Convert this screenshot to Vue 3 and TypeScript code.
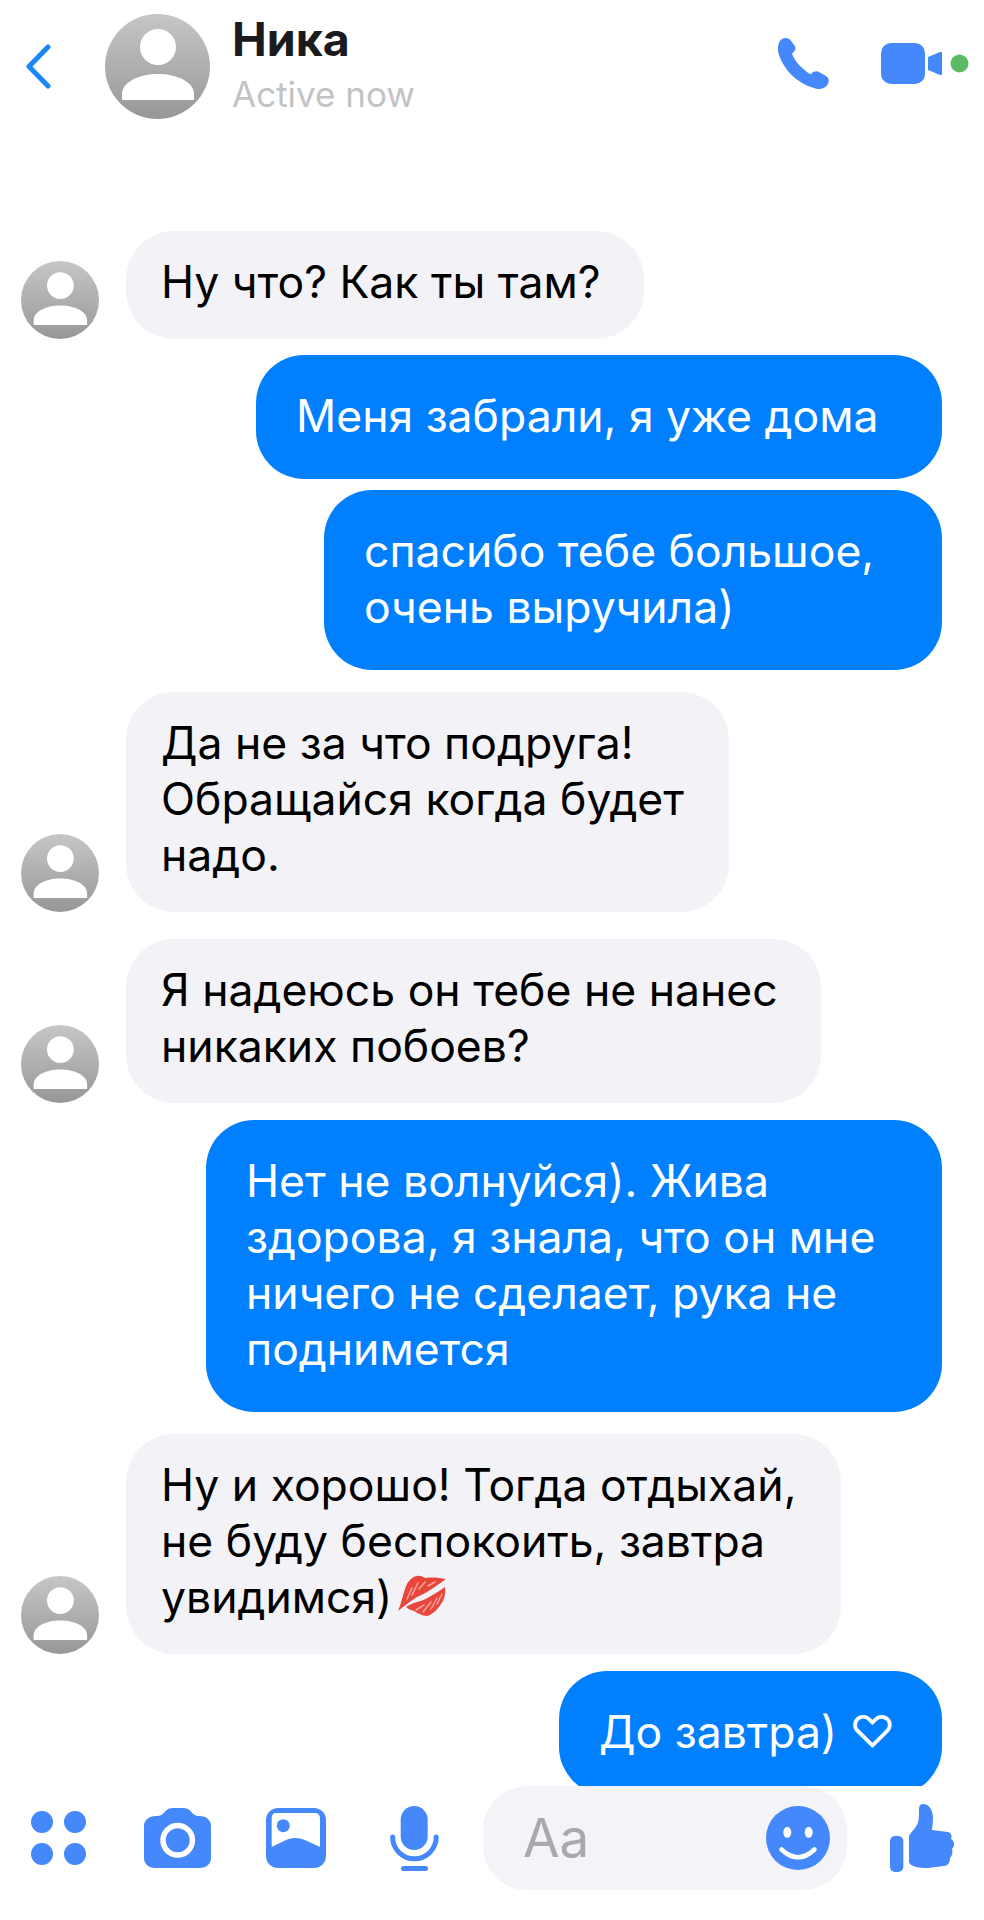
<script setup lang="ts">
interface Message {
  id: number
  mine: boolean
  lines: string[]
  width: number
  gap: number
  kiss?: boolean
}

const messages: Message[] = [
  { id: 1, mine: false, lines: ['Ну что? Как ты там?'], width: 518, gap: 0 },
  { id: 2, mine: true, lines: ['Меня забрали, я уже дома'], width: 686, gap: 16 },
  { id: 3, mine: true, lines: ['спасибо тебе большое,', 'очень выручила)'], width: 618, gap: 11 },
  { id: 4, mine: false, lines: ['Да не за что подруга!', 'Обращайся когда будет', 'надо.'], width: 603, gap: 22 },
  { id: 5, mine: false, lines: ['Я надеюсь он тебе не нанес', 'никаких побоев?'], width: 695, gap: 27 },
  {
    id: 6,
    mine: true,
    lines: ['Нет не волнуйся). Жива', 'здорова, я знала, что он мне', 'ничего не сделает, рука не', 'поднимется'],
    width: 736,
    gap: 17,
  },
  {
    id: 7,
    mine: false,
    lines: ['Ну и хорошо! Тогда отдыхай,', 'не буду беспокоить, завтра', 'увидимся)'],
    width: 715,
    gap: 22,
    kiss: true,
  },
  { id: 8, mine: true, lines: ['До завтра) ♡'], width: 383, gap: 17 },
]
</script>

<template>
  <div class="page">
    <header class="header">
      <svg class="back" viewBox="0 0 25 45" aria-hidden="true">
        <path d="M22 3 L3 22.5 L22 42" />
      </svg>
      <div class="avatar avatar-large">
        <svg viewBox="0 0 105 105" aria-hidden="true">
          <circle cx="53" cy="33" r="18" />
          <path d="M17 86 V80 C17 68 34 60 53 60 C72 60 89 68 89 80 V86 Z" />
        </svg>
      </div>
      <div class="title">
        <div class="name">Ника</div>
        <div class="status">Active now</div>
      </div>
      <div class="actions">
        <svg class="phone" viewBox="0 0 152 152" aria-hidden="true">
          <path d="M8 6 C16 -2 30 -2 37 6 L49 22 C54 29 52 36 47 41 L42 46 C46 66 78 98 97 108 C104 100 114 97 122 101 L143 113 C152 118 154 130 147 140 C140 149 126 154 114 151 C52 135 14 90 1 44 C-2 30 1 14 8 6 Z" />
        </svg>
        <svg class="video" viewBox="0 0 88 41" aria-hidden="true">
          <rect x="0" y="0" width="44" height="41" rx="10" />
          <path d="M47 14 L59 9 C60.5 8.5 61 9.5 61 11 V30 C61 31.5 60.5 32.5 59 32 L47 27 Z" />
          <circle class="online" cx="78.5" cy="20.5" r="9" />
        </svg>
      </div>
    </header>

    <main class="messages">
      <div
        v-for="message in messages"
        :key="message.id"
        class="row"
        :class="{ mine: message.mine }"
        :style="{ marginTop: message.gap + 'px' }"
      >
        <div v-if="!message.mine" class="avatar avatar-small">
          <svg viewBox="0 0 105 105" aria-hidden="true">
            <circle cx="53" cy="33" r="18" />
            <path d="M17 86 V80 C17 68 34 60 53 60 C72 60 89 68 89 80 V86 Z" />
          </svg>
        </div>
        <div class="bubble" :style="{ width: message.width + 'px' }">
          <div v-for="line in message.lines" :key="line" class="line">{{ line }}</div>
          <svg v-if="message.kiss" class="kiss" viewBox="0 0 48 42" aria-hidden="true">
            <path class="lip" d="M0 37 C3 30 6 16 9 10 C12 5 16 2 19 2 C23 1 25 4 28 4 C34 3 42 4 48 5 C42 9 36 14 29 18 C24 21 20 22 16 25 C10 29 5 33 0 37 Z" />
            <path class="lip" d="M47 13 C48 20 46 26 43 30 C39 36 34 41 29 42 C24 42 20 39 16 37 C13 36 10 35 8 33 C11 31 15 29 19 28 C24 27 28 25 33 22 C38 19 43 16 47 13 Z" />
            <path class="crease" d="M9 25 L14 14 M14 21 L20 9 M21 15 L27 8 M30 12 L37 8 M18 36 L26 31 M25 38 L33 28 M33 35 L39 24 M39 30 L44 20" />
          </svg>
        </div>
      </div>
    </main>

    <footer class="composer">
      <svg class="icon dots" viewBox="0 0 55 54" aria-hidden="true">
        <circle cx="11" cy="11" r="11" />
        <circle cx="44" cy="11" r="11" />
        <circle cx="11" cy="43" r="11" />
        <circle cx="44" cy="43" r="11" />
      </svg>
      <svg class="icon camera" viewBox="0 0 67 60" aria-hidden="true">
        <path d="M12 8 C17 8 19 6 21 3.5 C23 1 26 0 29 0 H39 C42 0 45 1 47 3.5 C49 6 51 8 56 8 C62 8 67 12 67 18 V50 C67 56 62 60 56 60 H11 C5 60 0 56 0 50 V18 C0 12 5 8 12 8 Z" />
        <circle class="ring" cx="33.7" cy="32.3" r="14.7" />
      </svg>
      <svg class="icon picture" viewBox="0 0 60 60" aria-hidden="true">
        <rect width="60" height="60" rx="12" />
        <path class="cut" d="M10 5 H49 C52 5 54 7 54 10 V39 L41 33 C33 29 25 29 18 33 L5.7 39 V10 C5.7 7 7 5 10 5 Z" />
        <circle cx="17.3" cy="17.7" r="6.5" />
      </svg>
      <svg class="icon mic" viewBox="0 0 49 65" aria-hidden="true">
        <rect x="10.7" y="0" width="27" height="44" rx="13.5" />
        <path class="arc" d="M2.6 31 A21.8 21.8 0 0 0 46.2 31" />
        <rect x="11" y="60" width="27" height="5" rx="2.5" />
      </svg>
      <div class="input">
        <span class="placeholder">Aa</span>
        <svg class="icon smile" viewBox="0 0 64 64" aria-hidden="true">
          <circle cx="32" cy="32" r="32" />
          <ellipse class="cut" cx="21.3" cy="26.3" rx="4" ry="5.5" />
          <ellipse class="cut" cx="42.7" cy="26.3" rx="4" ry="5.5" />
          <path class="mouth" d="M15.5 43.5 Q32 59 48.5 43.5" />
        </svg>
      </div>
      <svg class="icon thumb" viewBox="0 0 65 68" aria-hidden="true">
        <rect x="0" y="32" width="13.3" height="36" rx="5" />
        <path d="M33 0 C39 0 43 6 43 14 C43 20 42 24 42 26 L58 28 C62 29 62 33 61 35 C65 37 65 42 62 45 C63 49 62 52 60 54 C60 58 58 62 54 62 L38 64 C30 64 20 63 19 58 V34 C19 30 22 28 25 24 C29 19 29 14 29 6 C29 2 30 0 33 0 Z" />
      </svg>
    </footer>
  </div>
</template>

<style>
html,
body {
  margin: 0;
  background: #fff;
}
</style>

<style scoped>
.page {
  display: flex;
  flex-direction: column;
  width: 984px;
  height: 1920px;
  overflow: hidden;
  background: #fff;
  font-family: Inter, 'DejaVu Sans', sans-serif;
  color: #000;
}

.header {
  display: flex;
  align-items: center;
  flex: none;
  height: 104px;
  padding: 14px 15px 0 26px;
}

.back {
  flex: none;
  width: 25px;
  height: 45px;
  fill: none;
  stroke: #1a87f8;
  stroke-width: 5;
  stroke-linecap: round;
  stroke-linejoin: round;
}

.avatar {
  flex: none;
  border-radius: 50%;
  background: linear-gradient(#c6c6c8, #97979a);
}

.avatar svg {
  display: block;
  width: 100%;
  height: 100%;
  fill: #fff;
}

.avatar-large {
  width: 105px;
  height: 105px;
  margin-left: 54px;
}

.avatar-small {
  width: 78px;
  height: 78px;
  margin-right: 27px;
}

.title {
  margin-left: 22px;
  align-self: flex-start;
}

.name {
  font-size: 46.5px;
  line-height: 50px;
  font-weight: 700;
  color: #1b1b1d;
}

.status {
  margin-top: 9px;
  font-size: 35px;
  line-height: 42px;
  color: #c3c3c5;
}

.actions {
  display: flex;
  align-items: center;
  gap: 52px;
  margin-left: auto;
  margin-bottom: 5px;
}

.phone {
  width: 51px;
  height: 51px;
  fill: #4488fb;
}

.video {
  width: 88px;
  height: 41px;
  fill: #4488fb;
}

.online {
  fill: #5cbb63;
}

.messages {
  flex: 1;
  min-height: 0;
  overflow: hidden;
  padding: 113px 42px 0 21px;
}

.row {
  display: flex;
  align-items: flex-end;
}

.row.mine {
  justify-content: flex-end;
}

.bubble {
  position: relative;
  box-sizing: border-box;
  flex: none;
  padding: 23px 0 29px 35px;
  border-radius: 48px;
  background: #f3f2f6;
  font-size: 44.5px;
  line-height: 56px;
}

.mine .bubble {
  padding: 33px 0 35px 40px;
  background: #0080fe;
  color: #fff;
}

.line {
  white-space: nowrap;
}

.kiss {
  position: absolute;
  left: 272px;
  bottom: 38px;
  width: 48px;
  height: 42px;
}

.lip {
  fill: #e8463b;
}

.crease {
  fill: none;
  stroke: #f7a79d;
  stroke-width: 1.5;
  stroke-linecap: round;
}

.composer {
  display: flex;
  align-items: center;
  flex: none;
  height: 134px;
  box-sizing: border-box;
  padding: 0 0 30px 31px;
}

.icon {
  flex: none;
  fill: #4488fb;
}

.dots {
  width: 55px;
  height: 54px;
}

.camera {
  width: 67px;
  height: 60px;
  margin-left: 58px;
}

.ring {
  fill: none;
  stroke: #fff;
  stroke-width: 5.5;
}

.picture {
  width: 60px;
  height: 60px;
  margin-left: 55px;
}

.cut {
  fill: #fff;
}

.mic {
  width: 49px;
  height: 65px;
  margin-left: 64px;
}

.arc {
  fill: none;
  stroke: #4488fb;
  stroke-width: 5;
  stroke-linecap: round;
}

.input {
  display: flex;
  align-items: center;
  justify-content: space-between;
  flex: none;
  box-sizing: border-box;
  width: 364px;
  height: 104px;
  margin-left: 44px;
  padding: 0 17px 0 40px;
  border-radius: 44px;
  background: #f4f3f8;
}

.placeholder {
  font-size: 53px;
  color: #a9a9ab;
}

.smile {
  width: 64px;
  height: 64px;
}

.mouth {
  fill: none;
  stroke: #fff;
  stroke-width: 4.5;
  stroke-linecap: round;
}

.thumb {
  width: 65px;
  height: 68px;
  margin-left: 43px;
}
</style>
